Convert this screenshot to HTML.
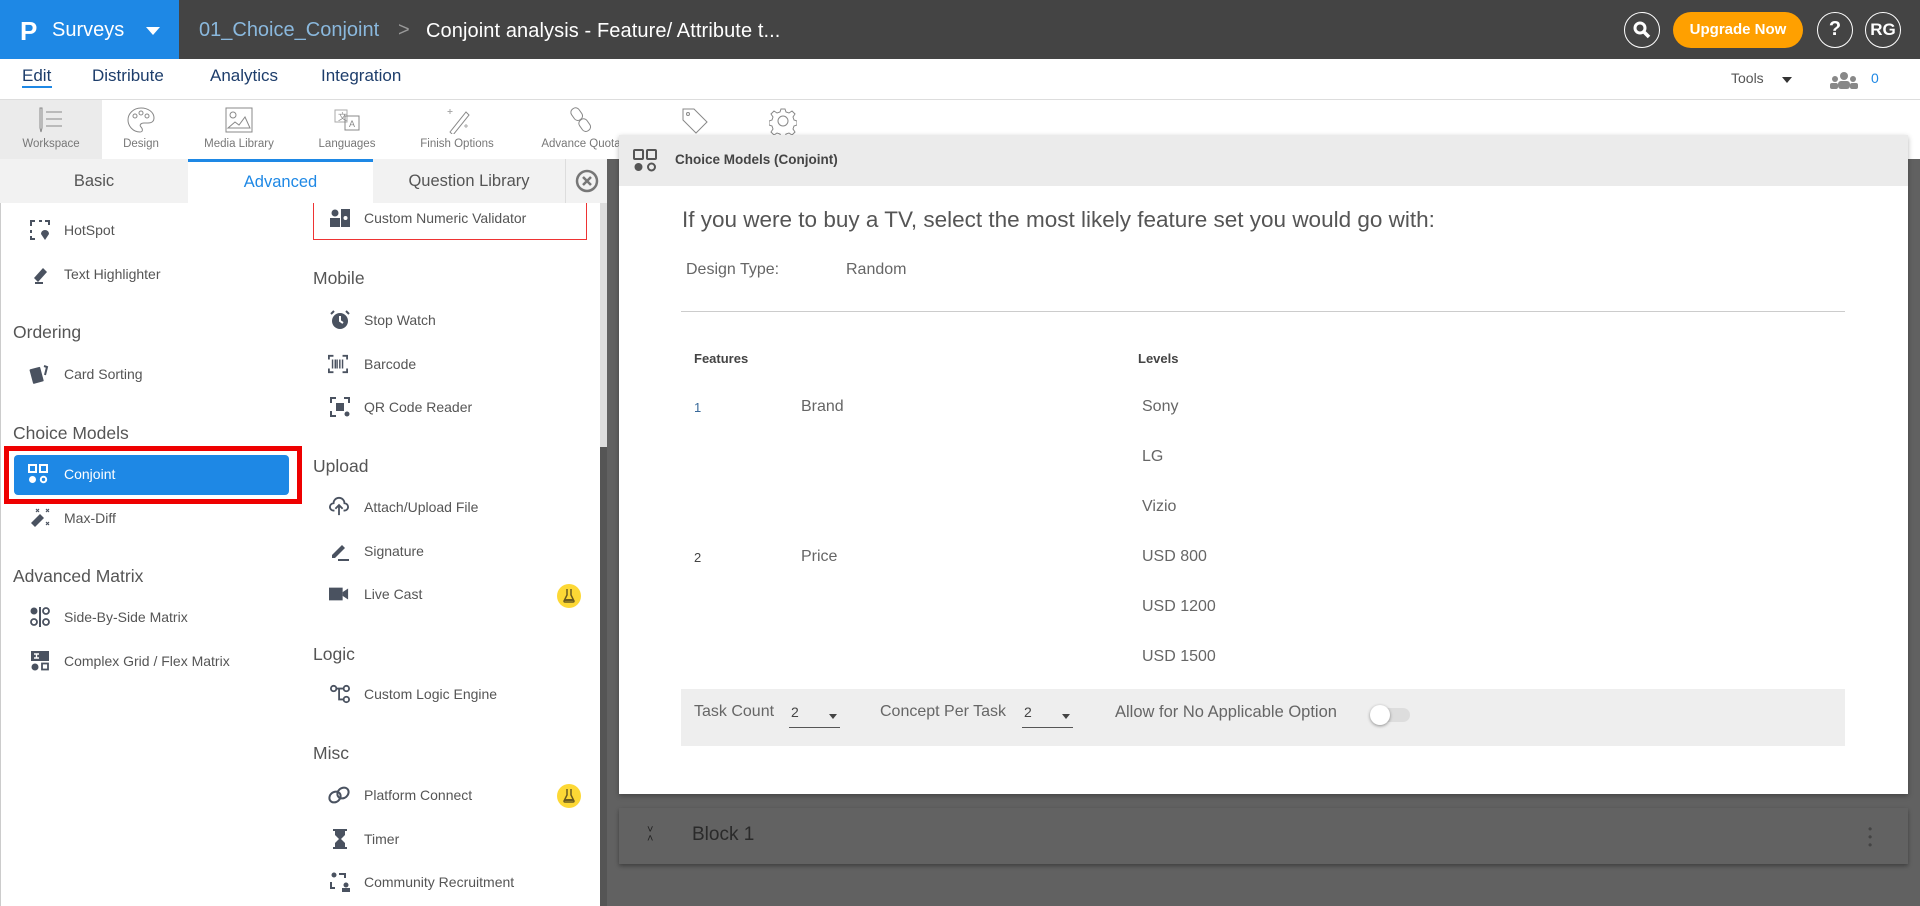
<!DOCTYPE html>
<html><head><meta charset="utf-8"><style>
*{box-sizing:border-box;margin:0;padding:0}
body{width:1920px;height:906px;overflow:hidden;position:relative;background:#fff;font-family:"Liberation Sans",sans-serif;color:#555}
.a{position:absolute;white-space:nowrap}
.top{left:0;top:0;width:1920px;height:59px;background:#444}
.brand{left:0;top:0;width:179px;height:59px;background:#1e88e5}
.circ{position:absolute;border:1.5px solid #fff;border-radius:50%;width:36px;height:36px;top:12px;color:#fff;font-weight:bold;font-size:17px;text-align:center;line-height:33px}
.nav{font-size:17px;color:#1d3d6b;top:66px}
.tb{top:100px;height:59px;width:100px;text-align:center;font-size:11.5px;color:#777}
.tb svg{display:block;margin:6px auto 4px}
.tab{top:159px;height:44px;background:#f2f2f2;font-size:16.5px;color:#555;text-align:center;line-height:44px}
.h{font-size:17.5px;color:#555}
.it{font-size:14px;color:#555}
.ic{position:absolute;width:20px;height:20px}
.c{font-size:16px;color:#666}
</style></head><body>
<div class="a top"></div>
<div class="a brand"></div>
<div class="a" style="left:20px;top:16px;color:#fff;font-size:26px;font-weight:bold">P</div>
<div class="a" style="left:52px;top:19px;color:#fff;font-size:20px">Surveys</div>
<div class="a" style="left:146px;top:27px;width:0;height:0;border-left:7px solid transparent;border-right:7px solid transparent;border-top:8px solid #fff"></div>
<div class="a" style="left:199px;top:19px;color:#8ab8dd;font-size:20px">01_Choice_Conjoint</div>
<div class="a" style="left:398px;top:19px;color:#999;font-size:20px">&gt;</div>
<div class="a" style="left:426px;top:20px;color:#fff;font-size:20px;letter-spacing:0.1px">Conjoint analysis - Feature/ Attribute t...</div>
<div class="circ" style="left:1624px"><svg width="20" height="20" viewBox="0 0 20 20" style="margin-top:7px"><circle cx="8" cy="8" r="5" stroke="#fff" stroke-width="3" fill="none"/><path d="M12 12l5 5" stroke="#fff" stroke-width="3.5"/></svg></div>
<div class="a" style="left:1673px;top:12px;width:130px;height:36px;border-radius:18px;background:#ffa000;color:#fff;font-size:15px;font-weight:bold;text-align:center;line-height:36px">Upgrade Now</div>
<div class="circ" style="left:1817px;font-size:20px">?</div>
<div class="circ" style="left:1865px">RG</div>

<div class="a nav" style="left:22px">Edit</div>
<div class="a" style="left:22px;top:86px;width:30px;height:2px;background:#1e88e5"></div>
<div class="a nav" style="left:92px">Distribute</div>
<div class="a nav" style="left:210px">Analytics</div>
<div class="a nav" style="left:321px">Integration</div>
<div class="a" style="left:1731px;top:70px;font-size:14px;color:#555">Tools</div>
<div class="a" style="left:1782px;top:77px;border-left:5px solid transparent;border-right:5px solid transparent;border-top:6px solid #333"></div>
<svg class="a" style="left:1830px;top:71px" width="28" height="18" viewBox="0 0 28 18"><circle cx="14" cy="5" r="4" fill="#888"/><circle cx="5" cy="8" r="3" fill="#888"/><circle cx="23" cy="8" r="3" fill="#888"/><rect x="8" y="10" width="12" height="8" rx="3" fill="#888"/><rect x="0" y="12" width="8" height="6" rx="2" fill="#888"/><rect x="20" y="12" width="8" height="6" rx="2" fill="#888"/></svg>
<div class="a" style="left:1871px;top:70px;font-size:14px;color:#1e88e5">0</div>
<div class="a" style="left:0;top:99px;width:1920px;height:1px;background:#ddd"></div>

<!-- toolbar -->
<div class="a tb" style="left:0;width:102px;background:#ebebeb"><svg width="30" height="28" viewBox="0 0 30 28"><path d="M4 2v20l1 4 1-4V2z" stroke="#888" fill="none"/><path d="M10 6h16M10 13h16M10 20h16" stroke="#888"/></svg>Workspace</div>
<div class="a tb" style="left:91px"><svg width="30" height="28" viewBox="0 0 30 28"><path d="M15 2C7 2 2 8 2 14s5 12 12 12c3 0 3-3 1-5s0-4 3-4h4c4 0 6-2 6-5C28 6 22 2 15 2z" stroke="#888" fill="none"/><circle cx="9" cy="10" r="2" stroke="#888" fill="none"/><circle cx="15" cy="7" r="2" stroke="#888" fill="none"/><circle cx="21" cy="10" r="2" stroke="#888" fill="none"/></svg>Design</div>
<div class="a tb" style="left:189px"><svg width="30" height="28" viewBox="0 0 30 28"><rect x="2" y="2" width="26" height="24" stroke="#888" fill="none"/><circle cx="9" cy="9" r="3" stroke="#888" fill="none"/><path d="M4 22l7-6 4 3 6-8 5 11z" stroke="#888" fill="none"/></svg>Media Library</div>
<div class="a tb" style="left:297px"><svg width="30" height="28" viewBox="0 0 30 28"><rect x="3" y="4" width="12" height="12" stroke="#aaa" fill="none"/><rect x="13" y="10" width="14" height="14" stroke="#888" fill="none"/><text x="6" y="14" font-size="9" fill="#888">文</text><text x="17" y="21" font-size="9" fill="#888">A</text></svg>Languages</div>
<div class="a tb" style="left:407px;width:100px"><svg width="30" height="28" viewBox="0 0 30 28"><path d="M8 26L24 6l3 3-16 20z" stroke="#888" fill="none"/><path d="M8 3v5M5.5 5.5h5M24 18v4M22 20h4" stroke="#aaa"/></svg>Finish Options</div>
<div class="a tb" style="left:526px;width:110px"><svg width="30" height="28" viewBox="0 0 30 28"><rect x="6" y="2" width="9" height="13" rx="4" stroke="#888" fill="none" transform="rotate(-35 10 8)"/><rect x="14" y="13" width="9" height="13" rx="4" stroke="#888" fill="none" transform="rotate(-35 18 19)"/></svg>Advance Quota</div>
<svg class="a" style="left:680px;top:106px" width="30" height="30" viewBox="0 0 30 30"><path d="M3 3h11l13 13-11 11L3 14z" stroke="#888" fill="none"/><circle cx="8" cy="8" r="1.5" stroke="#888" fill="none"/></svg>
<svg class="a" style="left:769px;top:107px" width="28" height="28" viewBox="0 0 28 28"><circle cx="14" cy="14" r="5" stroke="#888" fill="none"/><path d="M12 2h4l1 3 3 1 3-2 3 3-2 3 1 3 3 1v4l-3 1-1 3 2 3-3 3-3-2-3 1-1 3h-4l-1-3-3-1-3 2-3-3 2-3-1-3-3-1v-4l3-1 1-3-2-3 3-3 3 2 3-1z" stroke="#888" fill="none"/></svg>

<!-- main overlay -->
<div class="a" style="left:606px;top:159px;width:1314px;height:747px;background:#616161"></div>
<div class="a" style="left:619px;top:808px;width:1289px;height:56px;background:#626262;box-shadow:0 2px 4px rgba(0,0,0,.35)"></div>
<div class="a" style="left:647px;top:826px;color:#222;font-size:11px;line-height:9px">˅<br>˄</div>
<div class="a" style="left:692px;top:824px;color:#2a2a2a;font-size:19px">Block 1</div>
<div class="a" style="left:1868px;top:825px;color:#444;font-size:12px;line-height:8px">•<br>•<br>•</div>

<!-- card -->
<div class="a" style="left:619px;top:135px;width:1289px;height:659px;background:#fff;box-shadow:0 2px 5px rgba(0,0,0,.3)"></div>
<div class="a" style="left:619px;top:135px;width:1289px;height:51px;background:#ebebeb"></div>
<svg class="a" style="left:633px;top:149px" width="26" height="24" viewBox="0 0 26 24"><rect x="1" y="1" width="9" height="9" rx="1" stroke="#555" stroke-width="2" fill="none"/><rect x="14" y="1" width="9" height="9" rx="1" stroke="#555" stroke-width="2" fill="none"/><circle cx="5.5" cy="18" r="4" fill="#555"/><circle cx="18.5" cy="18" r="3.5" stroke="#555" stroke-width="2" fill="none"/></svg>
<div class="a" style="left:675px;top:152px;font-size:13.5px;font-weight:bold;color:#444">Choice Models (Conjoint)</div>
<div class="a" style="left:682px;top:207px;font-size:22.5px;color:#555">If you were to buy a TV, select the most likely feature set you would go with:</div>
<div class="a c" style="left:686px;top:261px">Design Type:</div>
<div class="a c" style="left:846px;top:261px">Random</div>
<div class="a" style="left:681px;top:311px;width:1164px;height:1px;background:#ccc"></div>
<div class="a" style="left:694px;top:351px;font-size:13px;font-weight:bold;color:#444">Features</div>
<div class="a" style="left:1138px;top:351px;font-size:13px;font-weight:bold;color:#444">Levels</div>
<div class="a" style="left:694px;top:400px;font-size:13px;color:#3a6a9a">1</div>
<div class="a c" style="left:801px;top:398px">Brand</div>
<div class="a" style="left:694px;top:550px;font-size:13px;color:#444">2</div>
<div class="a c" style="left:801px;top:548px">Price</div>
<div class="a c" style="left:1142px;top:398px">Sony</div>
<div class="a c" style="left:1142px;top:448px">LG</div>
<div class="a c" style="left:1142px;top:498px">Vizio</div>
<div class="a c" style="left:1142px;top:548px">USD 800</div>
<div class="a c" style="left:1142px;top:598px">USD 1200</div>
<div class="a c" style="left:1142px;top:648px">USD 1500</div>
<div class="a" style="left:681px;top:689px;width:1164px;height:57px;background:#eee"></div>
<div class="a c" style="left:694px;top:703px;font-size:16px">Task Count</div>
<div class="a c" style="left:791px;top:704px;font-size:14px;color:#444">2</div>
<div class="a" style="left:829px;top:714px;border-left:4px solid transparent;border-right:4px solid transparent;border-top:5px solid #444"></div>
<div class="a" style="left:789px;top:727px;width:51px;height:1px;background:#555"></div>
<div class="a c" style="left:880px;top:703px;font-size:16px">Concept Per Task</div>
<div class="a c" style="left:1024px;top:704px;font-size:14px;color:#444">2</div>
<div class="a" style="left:1062px;top:714px;border-left:4px solid transparent;border-right:4px solid transparent;border-top:5px solid #444"></div>
<div class="a" style="left:1022px;top:727px;width:51px;height:1px;background:#555"></div>
<div class="a c" style="left:1115px;top:703px;font-size:16.5px">Allow for No Applicable Option</div>
<div class="a" style="left:1372px;top:708px;width:38px;height:14px;border-radius:7px;background:#ddd"></div>
<div class="a" style="left:1370px;top:705px;width:20px;height:20px;border-radius:50%;background:#fff;box-shadow:0 1px 3px rgba(0,0,0,.4)"></div>

<!-- left panel -->
<div class="a" style="left:0;top:159px;width:606px;height:747px;background:#fff;border-left:1px solid #ccc"></div>
<div class="a" style="left:600px;top:203px;width:7px;height:244px;background:#ddd"></div>
<div class="a" style="left:600px;top:447px;width:7px;height:459px;background:#555"></div>
<div class="a tab" style="left:0;width:188px">Basic</div>
<div class="a tab" style="left:188px;width:185px;background:#fff;color:#1e88e5;border-top:3px solid #1e88e5;line-height:40px">Advanced</div>
<div class="a tab" style="left:373px;width:192px">Question Library</div>
<div class="a tab" style="left:565px;width:42px;border-left:1px solid #ddd"><svg width="24" height="24" viewBox="0 0 24 24" style="margin-top:10px"><circle cx="12" cy="12" r="10" stroke="#777" stroke-width="2.5" fill="none"/><path d="M8 8l8 8M16 8l-8 8" stroke="#777" stroke-width="2.5"/></svg></div>

<div class="a" style="left:313px;top:203px;width:274px;height:37px;border:1px solid #e33;border-top:none"></div>
<svg class="ic" style="left:330px;top:208px" viewBox="0 0 20 20"><circle cx="5" cy="5" r="3.5" fill="#4a5260"/><rect x="0" y="10" width="10" height="9" fill="#4a5260"/><rect x="11" y="1" width="9" height="18" fill="#4a5260"/><circle cx="15.5" cy="10" r="2" fill="#fff"/></svg>
<div class="a it" style="left:364px;top:210px">Custom Numeric Validator</div>

<svg class="ic" style="left:30px;top:220px" viewBox="0 0 20 20"><path d="M1 6V1h4M9 1h3M15 1h4v4M1 10v3M1 16v3h4" stroke="#4a5260" stroke-width="2" fill="none"/><path d="M15 20l-4-6a4 4 0 1 1 8 0z" fill="#4a5260"/></svg>
<div class="a it" style="left:64px;top:222px">HotSpot</div>
<svg class="ic" style="left:30px;top:264px" viewBox="0 0 20 20"><path d="M4 14l9-10 4 4-9 10z" fill="#4a5260"/><path d="M5 19h8" stroke="#4a5260" stroke-width="2"/></svg>
<div class="a it" style="left:64px;top:266px">Text Highlighter</div>
<div class="a h" style="left:13px;top:322px">Ordering</div>
<svg class="ic" style="left:29px;top:364px" viewBox="0 0 20 20"><rect x="2" y="4" width="11" height="15" rx="1" fill="#4a5260" transform="rotate(-15 7 11)"/><path d="M15 2l3 1-2 8" stroke="#4a5260" stroke-width="2" fill="none"/></svg>
<div class="a it" style="left:64px;top:366px">Card Sorting</div>
<div class="a h" style="left:13px;top:423px">Choice Models</div>
<div class="a" style="left:4px;top:446px;width:298px;height:58px;border:5px solid #e00"></div>
<div class="a" style="left:14px;top:455px;width:275px;height:40px;background:#1e88e5;border-radius:4px"></div>
<svg class="ic" style="left:28px;top:464px" viewBox="0 0 20 20"><rect x="1" y="1" width="7" height="7" stroke="#fff" stroke-width="2" fill="none"/><rect x="12" y="1" width="7" height="7" stroke="#fff" stroke-width="2" fill="none"/><circle cx="4.5" cy="15.5" r="3.5" fill="#fff"/><circle cx="15.5" cy="15.5" r="2.7" stroke="#fff" stroke-width="2" fill="none"/></svg>
<div class="a it" style="left:64px;top:466px;color:#fff">Conjoint</div>
<svg class="ic" style="left:30px;top:508px" viewBox="0 0 20 20"><path d="M1 15l9-9 4 4-9 9z" fill="#4a5260"/><path d="M6 1l3 3M9 1L6 4M16 1l3 3M19 1l-3 3M16 14l3 3M19 14l-3 3" stroke="#4a5260" stroke-width="1.2"/></svg>
<div class="a it" style="left:64px;top:510px">Max-Diff</div>
<div class="a h" style="left:13px;top:566px">Advanced Matrix</div>
<svg class="ic" style="left:30px;top:607px" viewBox="0 0 20 20"><circle cx="4" cy="4" r="3.5" fill="#4a5260"/><circle cx="4" cy="15" r="3" stroke="#4a5260" stroke-width="1.8" fill="none"/><rect x="9" y="0" width="2" height="20" fill="#4a5260"/><circle cx="16" cy="4" r="3" stroke="#4a5260" stroke-width="1.8" fill="none"/><circle cx="16" cy="15" r="3" stroke="#4a5260" stroke-width="1.8" fill="none"/></svg>
<div class="a it" style="left:64px;top:609px">Side-By-Side Matrix</div>
<svg class="ic" style="left:30px;top:651px" viewBox="0 0 20 20"><rect x="1" y="0" width="18" height="10" fill="#4a5260"/><path d="M4 3h5M4 7h5M6.5 3v4" stroke="#fff" stroke-width="1.4"/><circle cx="5" cy="16" r="3.5" fill="#4a5260"/><rect x="12" y="12.5" width="6" height="6" stroke="#4a5260" stroke-width="1.8" fill="none"/></svg>
<div class="a it" style="left:64px;top:653px">Complex Grid / Flex Matrix</div>

<div class="a h" style="left:313px;top:268px">Mobile</div>
<svg class="ic" style="left:330px;top:310px" viewBox="0 0 20 20"><circle cx="10" cy="11" r="8" fill="#4a5260"/><path d="M10 6v5l3 2" stroke="#fff" stroke-width="2" fill="none"/><path d="M1 4l3-3M19 4l-3-3" stroke="#4a5260" stroke-width="2"/></svg>
<div class="a it" style="left:364px;top:312px">Stop Watch</div>
<svg class="ic" style="left:328px;top:354px" viewBox="0 0 22 20"><path d="M1 5V1h5M16 1h5v4M1 15v4h5M16 19h5v-4" stroke="#4a5260" stroke-width="2" fill="none"/><path d="M5 5v10M8 5v10M10 5v10M13 5v10M16 5v10" stroke="#4a5260" stroke-width="1.6"/></svg>
<div class="a it" style="left:364px;top:356px">Barcode</div>
<svg class="ic" style="left:330px;top:397px" viewBox="0 0 20 20"><path d="M1 6V1h5M14 1h5v5M1 14v5h5" stroke="#4a5260" stroke-width="2" fill="none"/><rect x="6" y="6" width="8" height="8" fill="#4a5260"/><circle cx="17" cy="17" r="2.5" fill="#4a5260"/></svg>
<div class="a it" style="left:364px;top:399px">QR Code Reader</div>
<div class="a h" style="left:313px;top:456px">Upload</div>
<svg class="ic" style="left:329px;top:496px" viewBox="0 0 22 22"><path d="M6 16H5a4 4 0 0 1 0-8 6 6 0 0 1 12 0 4 4 0 0 1 0 8h-1" stroke="#4a5260" stroke-width="2" fill="none"/><path d="M11 21V11M7 14l4-4 4 4" stroke="#4a5260" stroke-width="2" fill="none"/></svg>
<div class="a it" style="left:364px;top:499px">Attach/Upload File</div>
<svg class="ic" style="left:330px;top:541px" viewBox="0 0 20 20"><path d="M2 14l10-10 3 3-10 10H2z" fill="#4a5260"/><path d="M8 19h11" stroke="#4a5260" stroke-width="2"/></svg>
<div class="a it" style="left:364px;top:543px">Signature</div>
<svg class="ic" style="left:329px;top:584px" viewBox="0 0 22 20"><rect x="0" y="3" width="15" height="14" fill="#4a5260"/><path d="M15 8l6-4v12l-6-4z" fill="#4a5260"/></svg>
<div class="a it" style="left:364px;top:586px">Live Cast</div>
<svg class="a" style="left:557px;top:584px" width="24" height="24" viewBox="0 0 24 24"><circle cx="12" cy="12" r="12" fill="#fdd835"/><path d="M10 5v6l-3 6a1 1 0 0 0 1 1h8a1 1 0 0 0 1-1l-3-6V5" stroke="#6a5a20" stroke-width="1.5" fill="none"/><path d="M8.5 15h7l1 2h-9z" fill="#6a5a20"/></svg>
<div class="a h" style="left:313px;top:644px">Logic</div>
<svg class="ic" style="left:330px;top:684px" viewBox="0 0 22 20"><circle cx="4" cy="4" r="3" stroke="#4a5260" stroke-width="2" fill="none"/><circle cx="18" cy="4" r="3" stroke="#4a5260" stroke-width="2" fill="none"/><circle cx="18" cy="16" r="3" stroke="#4a5260" stroke-width="2" fill="none"/><path d="M7 4h8M10 4v12h5" stroke="#4a5260" stroke-width="2" fill="none"/></svg>
<div class="a it" style="left:364px;top:686px">Custom Logic Engine</div>
<div class="a h" style="left:313px;top:743px">Misc</div>
<svg class="ic" style="left:327px;top:785px;width:24px" viewBox="0 0 24 20"><ellipse cx="8" cy="12" rx="6" ry="5" stroke="#4a5260" stroke-width="2" fill="none" transform="rotate(-40 8 12)"/><ellipse cx="16" cy="8" rx="6" ry="5" stroke="#4a5260" stroke-width="2" fill="none" transform="rotate(-40 16 8)"/></svg>
<div class="a it" style="left:364px;top:787px">Platform Connect</div>
<svg class="a" style="left:557px;top:784px" width="24" height="24" viewBox="0 0 24 24"><circle cx="12" cy="12" r="12" fill="#fdd835"/><path d="M10 5v6l-3 6a1 1 0 0 0 1 1h8a1 1 0 0 0 1-1l-3-6V5" stroke="#6a5a20" stroke-width="1.5" fill="none"/><path d="M8.5 15h7l1 2h-9z" fill="#6a5a20"/></svg>
<svg class="ic" style="left:331px;top:829px" viewBox="0 0 20 20"><path d="M2 1h14M2 19h14" stroke="#4a5260" stroke-width="2"/><path d="M4 2h10v4l-4 4 4 4v5H4v-5l4-4-4-4z" fill="#4a5260"/></svg>
<div class="a it" style="left:364px;top:831px">Timer</div>
<svg class="ic" style="left:330px;top:872px" viewBox="0 0 20 20"><circle cx="4" cy="3" r="2.5" fill="#4a5260"/><circle cx="16" cy="13" r="2.5" fill="#4a5260"/><rect x="12" y="16" width="8" height="4" fill="#4a5260"/><path d="M9 2h6v4M1 10v6h4" stroke="#4a5260" stroke-width="2" fill="none"/></svg>
<div class="a it" style="left:364px;top:874px">Community Recruitment</div>
</body></html>
